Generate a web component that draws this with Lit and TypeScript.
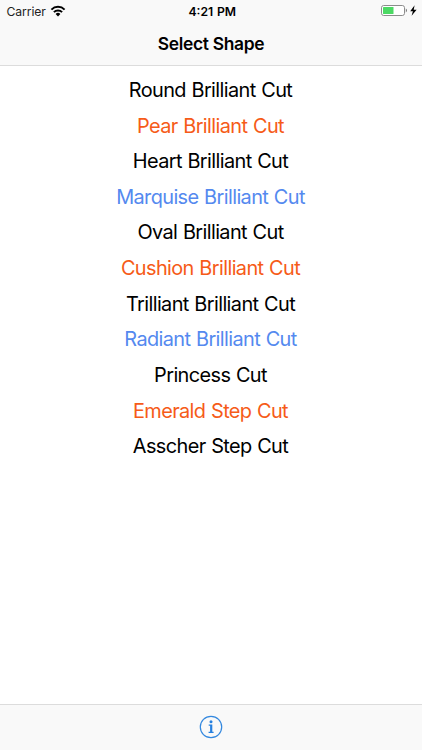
import { LitElement, html, css } from "lit";
import { customElement } from "lit/decorators.js";

type Tone = "ink" | "orange" | "blue";

const shapes: { name: string; tone: Tone }[] = [
  { name: "Round Brilliant Cut", tone: "ink" },
  { name: "Pear Brilliant Cut", tone: "orange" },
  { name: "Heart Brilliant Cut", tone: "ink" },
  { name: "Marquise Brilliant Cut", tone: "blue" },
  { name: "Oval Brilliant Cut", tone: "ink" },
  { name: "Cushion Brilliant Cut", tone: "orange" },
  { name: "Trilliant Brilliant Cut", tone: "ink" },
  { name: "Radiant Brilliant Cut", tone: "blue" },
  { name: "Princess Cut", tone: "ink" },
  { name: "Emerald Step Cut", tone: "orange" },
  { name: "Asscher Step Cut", tone: "ink" },
];

@customElement("app-root")
export class AppRoot extends LitElement {
  static styles = css`
    :host {
      display: flex;
      flex-direction: column;
      height: 100vh;
      background: #fff;
      color: #000;
      font-family: Inter, "Liberation Sans", sans-serif;
      overflow: hidden;
    }
    svg {
      display: block;
    }
    header {
      flex: none;
      box-sizing: border-box;
      height: 66px;
      background: #f9f9f9;
      border-bottom: 1px solid #dcdcdc;
    }
    .status {
      display: grid;
      grid-template-columns: 1fr auto 1fr;
      align-items: center;
      height: 22px;
      padding: 0 4px 0 6.5px;
      font-size: 12.2px;
    }
    .carrier {
      display: flex;
      align-items: center;
      gap: 4.5px;
      color: #222;
      letter-spacing: -0.1px;
    }
    .wifi {
      margin-top: -1px;
    }
    .time {
      font-weight: 600;
      word-spacing: 0.6px;
    }
    .battery {
      justify-self: end;
    }
    .title {
      margin: 0;
      height: 43px;
      line-height: 43px;
      text-align: center;
      font-size: 17.4px;
      font-weight: 600;
      letter-spacing: -0.3px;
    }
    .list {
      flex: 1;
      margin: 0;
      padding: 6.9px 1px 0 0;
      list-style: none;
    }
    .row {
      height: 35.65px;
      line-height: 35.3px;
      text-align: center;
      font-size: 19.9px;
      letter-spacing: -0.6px;
      word-spacing: 0.6px;
    }
    .orange {
      color: #f65b18;
    }
    .blue {
      color: #5489ef;
    }
    footer {
      flex: none;
      box-sizing: border-box;
      height: 46px;
      display: flex;
      align-items: center;
      justify-content: center;
      background: #f9f9f9;
      border-top: 1px solid #dcdcdc;
    }
    .info {
      margin-top: -1px;
    }
  `;

  render() {
    return html`
      <header>
        <div class="status">
          <div class="carrier">
            <span>Carrier</span>
            <svg class="wifi" width="16" height="12" viewBox="0 0 16 12">
              <g fill="none" stroke="#000" stroke-width="2">
                <path d="M1.4 4.6a9.3 9.3 0 0 1 13.2 0" />
                <path d="M3.9 7.1a5.8 5.8 0 0 1 8.2 0" />
              </g>
              <path d="M8 11.4 5.6 8.9a3.4 3.4 0 0 1 4.8 0z" />
            </svg>
          </div>
          <div class="time">4:21 PM</div>
          <svg class="battery" width="37" height="12" viewBox="0 0 37 12">
            <rect x="0.5" y="0.5" width="23" height="10" rx="2.2" fill="#fff" stroke="#8c8c8c" />
            <rect x="2" y="2" width="10.5" height="7" rx="0.5" fill="#4cd964" />
            <path d="M24.8 3.6c1.6.8 1.6 3 0 3.8z" fill="#777" />
            <path d="M33.6.2 29.2 6.2h2.7L30.6 10.8 35.6 4.7h-2.9z" />
          </svg>
        </div>
        <h1 class="title">Select Shape</h1>
      </header>
      <ul class="list">
        ${shapes.map((s) => html`<li class="row ${s.tone}">${s.name}</li>`)}
      </ul>
      <footer>
        <svg class="info" width="24" height="24" viewBox="0 0 24 24">
          <circle cx="12" cy="12" r="10.7" fill="none" stroke="#3388df" stroke-width="1.2" />
          <circle cx="12" cy="6.8" r="1.5" fill="#2680df" />
          <path d="M9.7 9.6h3.6v7.2h1.3v1.2H9.6v-1.2h1.5v-6H9.7z" fill="#2680df" />
        </svg>
      </footer>
    `;
  }
}
